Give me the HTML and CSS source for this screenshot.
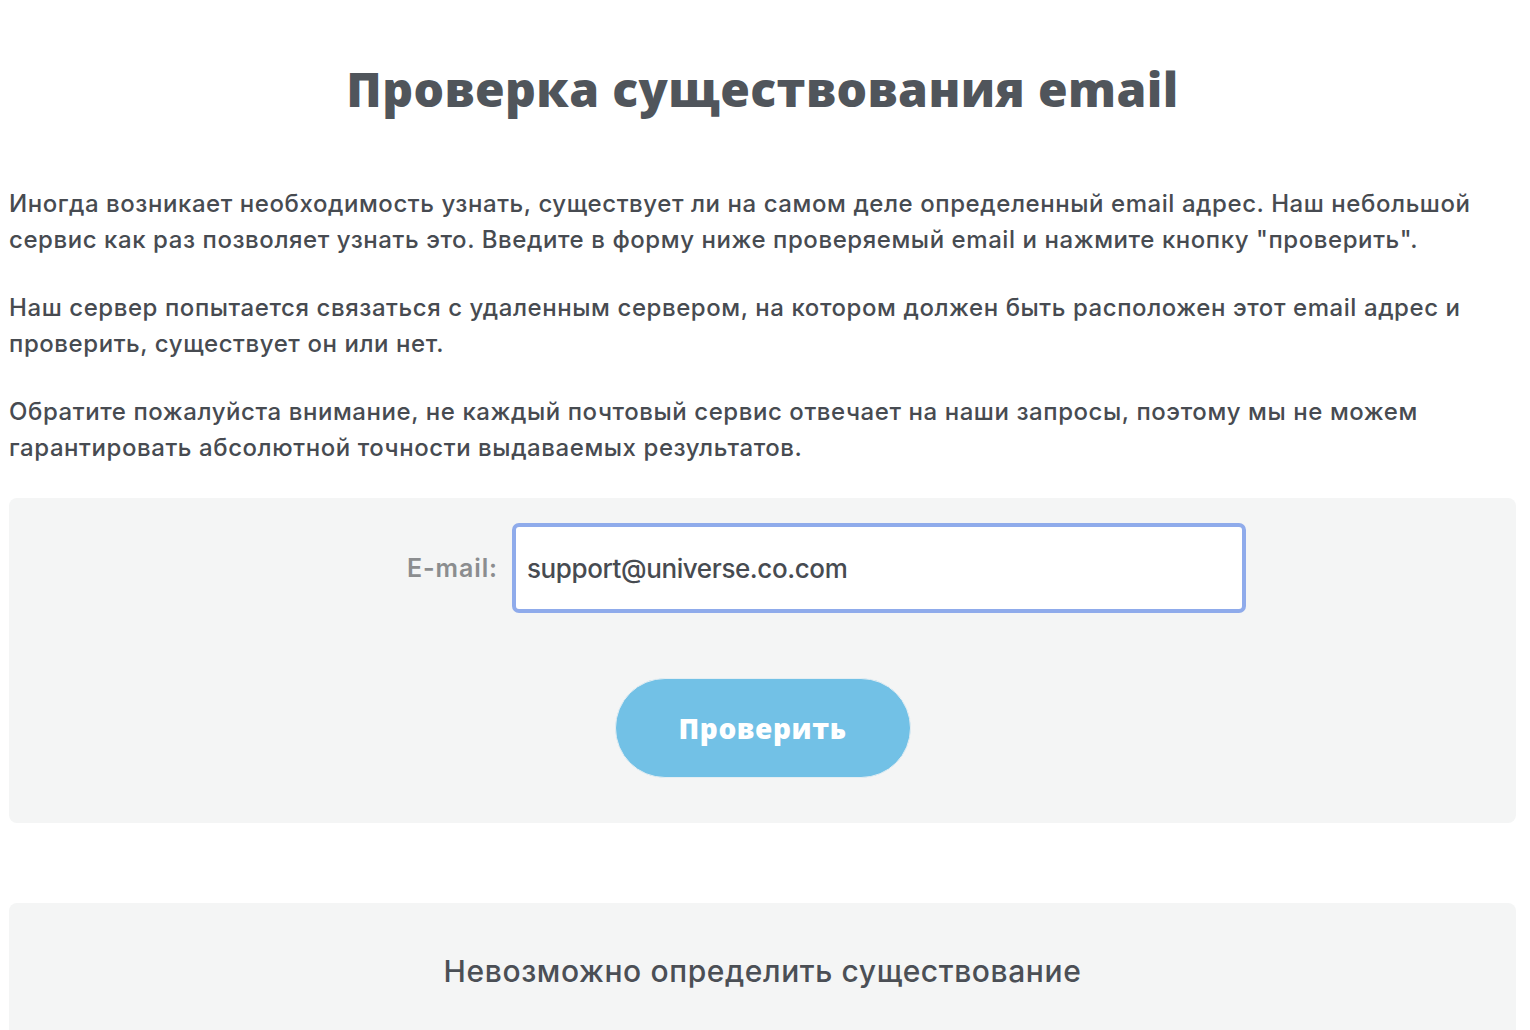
FILE: index.html
```html
<!DOCTYPE html>
<html lang="ru">
<head>
    <meta charset="UTF-8">
    <meta name="viewport" content="width=device-width, initial-scale=1.0">
    <title>Проверка существования email</title>
    <link rel="stylesheet" href="styles.css">
</head>
<body>
    <div class="page">
        <h1 class="title">Проверка существования email</h1>

        <p class="text">Иногда возникает необходимость узнать, существует ли на самом деле определенный email адрес. Наш небольшой сервис как раз позволяет узнать это. Введите в форму ниже проверяемый email и нажмите кнопку "проверить".</p>
        <p class="text">Наш сервер попытается связаться с удаленным сервером, на котором должен быть расположен этот email адрес и проверить, существует он или нет.</p>
        <p class="text">Обратите пожалуйста внимание, не каждый почтовый сервис отвечает на наши запросы, поэтому мы не можем гарантировать абсолютной точности выдаваемых результатов.</p>

        <form class="check-form" onsubmit="return false">
            <div class="form-row">
                <label class="form-label" for="email">E-mail:</label>
                <input class="form-input" id="email" type="text" value="support@universe.co.com">
            </div>
            <button class="check-btn" type="submit">Проверить</button>
        </form>

        <div class="result">
            <p class="result-text">Невозможно определить существование</p>
        </div>
    </div>
</body>
</html>
```

FILE: styles.css
```css
/* General Styles */
body {
    margin: 0;
    padding: 0;
    background: #fff;
    color: #4f5359;
    font-family: 'Inter', sans-serif;
}

.page {
    padding: 0 14px 0 9px;
}

/* Title */
.title {
    margin: 0;
    padding-top: 58px;
    text-align: center;
    font-family: 'Open Sans', sans-serif;
    font-size: 48px;
    font-weight: 800;
    line-height: 62px;
    color: #50555b;
    letter-spacing: 0.4px;
}

/* Intro text */
.title + .text {
    margin-top: 66px;
}

.text {
    margin: 0 0 32px;
    font-size: 24px;
    font-weight: 500;
    line-height: 36px;
    letter-spacing: 0.57px;
    color: #474b51;
}

/* Form panel */
.check-form {
    margin-top: 32px;
    background: #f4f5f5;
    border-radius: 8px;
    padding: 25px 0 45px;
    display: flex;
    flex-direction: column;
    align-items: center;
}

.form-row {
    display: flex;
    align-items: center;
    gap: 14px;
    padding-left: 128px;
}

.form-label {
    font-size: 25px;
    font-weight: 600;
    letter-spacing: 0.9px;
    color: #8b8d8f;
}

.form-input {
    box-sizing: border-box;
    width: 734px;
    height: 90px;
    border: 4px solid #8fabeb;
    border-radius: 7px;
    padding: 0 11px;
    font-family: 'Inter', sans-serif;
    font-size: 26px;
    font-weight: 500;
    letter-spacing: -0.4px;
    color: #474b51;
    background: #fff;
    outline: none;
}

.check-btn {
    margin-top: 65px;
    width: 296px;
    height: 100px;
    border: 1px solid #e4eef3;
    border-radius: 50px;
    background: #72c1e6;
    color: #fff;
    font-family: 'Open Sans', sans-serif;
    font-size: 28px;
    font-weight: 800;
    letter-spacing: 0.6px;
    cursor: pointer;
}

/* Result panel */
.result {
    margin-top: 80px;
    background: #f4f5f5;
    border-radius: 8px;
    padding: 50px 0 60px;
}

.result-text {
    margin: 0;
    text-align: center;
    font-size: 30px;
    font-weight: 500;
    letter-spacing: 0.6px;
    color: #4b4f55;
}
```
